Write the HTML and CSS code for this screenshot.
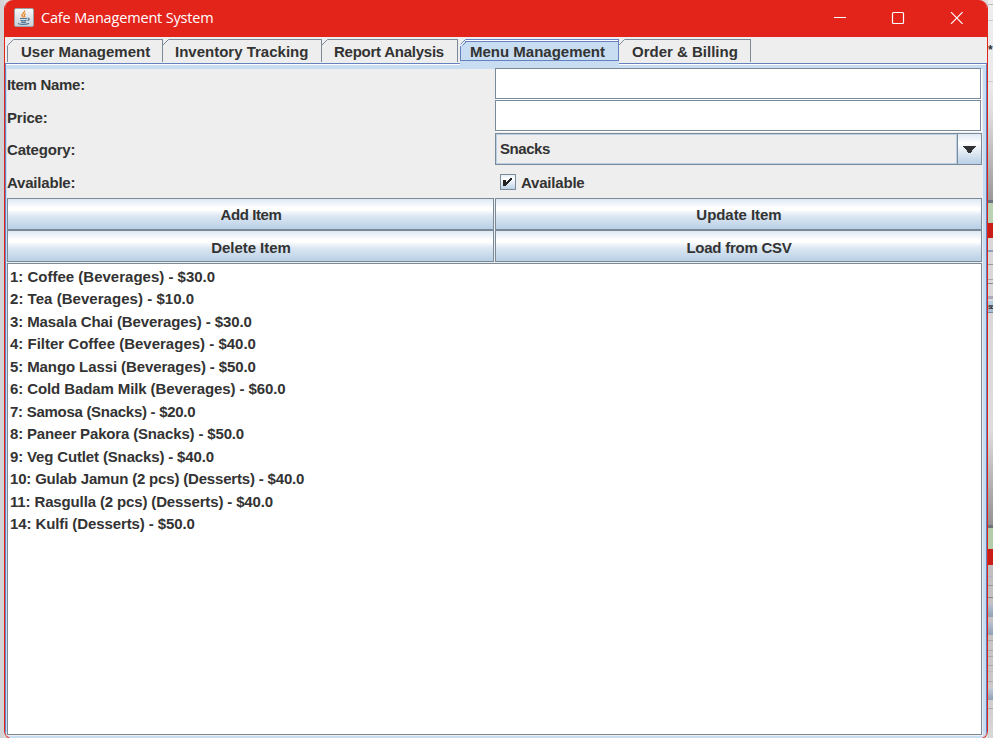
FILE: index.html
```html
<!DOCTYPE html>
<html lang="en">
<head>
<meta charset="utf-8">
<title>Cafe Management System</title>
<link rel="stylesheet" href="styles.css">
</head>
<body>
<div class="desktop">
  <main class="window">
    <header class="titlebar">
      <svg class="app-icon" width="20" height="19" viewBox="0 0 20 19">
        <defs><linearGradient id="tile" x1="0" y1="0" x2="0" y2="1"><stop offset="0" stop-color="#f8f8f8"/><stop offset="1" stop-color="#c9d0d6"/></linearGradient></defs>
        <rect x=".5" y=".5" width="19" height="18" rx="1.5" fill="url(#tile)" stroke="#9ba2a8"/>
        <path d="M10.6 2.5c1 2-3.2 3-2.6 5 .2.8 1 1.400 1.600 2M11.800 5.500c-2.500 1-1.500 2.300-.8 3.700" fill="none" stroke="#e98724" stroke-width="1.300"/>
        <path d="M6 10.500h7M6.500 12.300c2 .7 4 .7 6 0M7 14c1.500.6 3.500.6 5 0M13.500 10.300c2.500-.3 2.200 1.700 0 2.300M4.500 15c-1.500 1.500 8 2 10.500.3" fill="none" stroke="#4f7898" stroke-width="1.100"/>
      </svg>
      <h1 class="title">Cafe Management System</h1>
      <svg class="controls" width="136" height="20" viewBox="0 0 136 20" fill="none" stroke="#fff">
        <path d="M2 9.500h12"/>
        <rect x="60.500" y="4.500" width="11" height="11" rx="1" stroke-width="1.200"/>
        <path d="M119 4.200l11.600 11.600M130.600 4.200L119 15.800" stroke-width="1.200"/>
      </svg>
    </header>
    <nav class="tabs">
      <div class="tab tab-users"><svg class="notch" width="8" height="8"><path d="M.5 6.500L6.500 .5H8"/></svg><span>User Management</span></div>
      <div class="tab tab-inventory"><svg class="notch" width="8" height="8"><path d="M0 6L5.500 .5H8"/></svg><span>Inventory Tracking</span></div>
      <div class="tab tab-report"><svg class="notch" width="8" height="8"><path d="M0 6L5.500 .5H8"/></svg><span>Report Analysis</span></div>
      <div class="tab tab-menu"><svg class="notch" width="8" height="8"><path d="M.5 5.500L5.500 .5H8M2.500 6.500L6.500 2.500H8"/></svg><span>Menu Management</span></div>
      <div class="tab tab-order"><svg class="notch" width="8" height="8"><path d="M0 6L5.500 .5H8"/></svg><span>Order &amp; Billing</span></div>
    </nav>
    <section class="panel">
      <div class="form">
        <label class="item-name">Item Name:</label><div class="field"></div>
        <label class="low">Price:</label><div class="field"></div>
        <label>Category:</label>
        <div class="combo"><span class="combo-value">Snacks</span><span class="combo-arrow"><svg width="13" height="7" shape-rendering="crispEdges"><path d="M0 0h13L7.500 7h-2z" fill="#333"/></svg></span></div>
        <label class="low">Available:</label>
        <div class="check"><svg class="box" width="16" height="16" viewBox="0 0 16 16">
          <defs><linearGradient id="metal" x1="0" y1="0" x2="0" y2="1"><stop offset="0" stop-color="#e4edf6"/><stop offset=".3" stop-color="#fff"/><stop offset="1" stop-color="#b8cfe5"/></linearGradient></defs>
          <rect x=".5" y=".5" width="15" height="15" fill="url(#metal)" stroke="#7a8a99"/>
          <path d="M3 6h3v3l5-5.500h1v2L6 12H3z" fill="#222" shape-rendering="crispEdges"/></svg><span>Available</span></div>
        <button class="add">Add Item</button><button>Update Item</button>
        <button class="delete">Delete Item</button><button class="load">Load from CSV</button>
      </div>
      <ul class="list">
        <li>1: Coffee (Beverages) - $30.0</li>
        <li>2: Tea (Beverages) - $10.0</li>
        <li>3: Masala Chai (Beverages) - $30.0</li>
        <li>4: Filter Coffee (Beverages) - $40.0</li>
        <li>5: Mango Lassi (Beverages) - $50.0</li>
        <li>6: Cold Badam Milk (Beverages) - $60.0</li>
        <li>7: Samosa (Snacks) - $20.0</li>
        <li>8: Paneer Pakora (Snacks) - $50.0</li>
        <li>9: Veg Cutlet (Snacks) - $40.0</li>
        <li>10: Gulab Jamun (2 pcs) (Desserts) - $40.0</li>
        <li>11: Rasgulla (2 pcs) (Desserts) - $40.0</li>
        <li>14: Kulfi (Desserts) - $50.0</li>
      </ul>
    </section>
  </main>
  <aside class="behind"><span class="star">*</span><span class="peek">se</span></aside>
</div>
</body>
</html>
```
FILE: styles.css
```css
* { box-sizing: border-box; }
body { margin: 0; width: 993px; height: 738px; overflow: hidden; font: bold 15px/20px "Liberation Sans", Arial, sans-serif; color: #333; }
.desktop { position: relative; display: flex; height: 738px; padding-left: 4px; background: linear-gradient(90deg, #d4d4d6 4px, #dcdcdc 4px); }
.window { position: relative; z-index: 1; width: 984px; height: 739px; border: 1px solid #e3241b; border-top: 0; border-radius: 9px 9px 8px 8px; overflow: hidden; background: #eee; display: flex; flex-direction: column; flex: none; }
.titlebar { flex: none; height: 37px; margin: 0 -1px; padding-left: 10px; background: #e3241b; display: flex; align-items: center; }
.app-icon { margin-top: -2px; }
.title { margin: -1px 0 0 7px; font: 400 14.5px/20px "Open Sans", "Noto Sans", sans-serif; color: #fff; letter-spacing: -.17px; flex: 1; white-space: nowrap; }
.controls { margin-right: 20px; margin-top: -1px; }

.tabs { flex: none; height: 26px; padding: 2px 0 0 2px; display: flex; }
.tab { position: relative; height: 23px; border: 1px solid #7a8a99; border-width: 1px 1px 0 0; white-space: nowrap; line-height: 24px; padding-left: 13px; }
.tab-users { width: 156px; border-left-width: 1px; }
.tab-inventory { width: 159px; padding-left: 12px; }
.tab-report { width: 136px; padding-left: 12px; letter-spacing: -.25px; }
.tab-menu { width: 159px; height: 29px; margin-left: 2px; padding-left: 9px; background: linear-gradient(#6382bf, #6382bf) 0 20px / 157px 1px no-repeat, #c8ddf2; border-color: #6382bf; border-left: 1px solid #6382bf; z-index: 2; box-shadow: inset 0 1px #fff, inset 0 2px #6382bf; }
.tab-menu::after { content: ""; position: absolute; left: -1px; right: -1px; top: 21px; height: 7px; background: #c8ddf2; }
.tab-order { width: 132px; padding-left: 13px; }
.notch { position: absolute; left: 0; top: -1px; background: linear-gradient(135deg, #eee 42%, transparent 42%); fill: none; stroke: #7a8a99; }
.tab-users .notch { left: -1px; background: linear-gradient(135deg, #eee 48%, transparent 48%); }
.tab-menu .notch { left: -1px; stroke: #6382bf; background: linear-gradient(135deg, #eee 36%, #fff 36%, #fff 48%, transparent 48%); }

.panel { flex: 1; display: flex; flex-direction: column; border: solid #6382bf; border-width: 1px 1px 0; padding: 4px 4px 3px 1px; box-shadow: inset 0 1px #fff, inset -3px 0 #c8ddf2, inset 1px 0 #c8ddf2, inset 0 5px #c8ddf2, inset 0 -2px #c8ddf2; }
.form { flex: none; height: 195px; display: grid; grid-template-columns: 487px 487px; grid-template-rows: 32px 33px 33px 32px 32px 33px; column-gap: 1px; }
.form label { align-self: center; letter-spacing: -.2px; padding-top: 1px; }
.form label.item-name { letter-spacing: -.3px; }
.form label.low { padding-top: 2px; }
.field { height: 31px; background: #fff; border: 1px solid #7a8a99; margin-right: 1px; box-shadow: 1px 1px #fff; }
.form .combo { height: 32px; border: 1px solid #7a8a99; display: flex; box-shadow: inset 1px 1px #b8cfe5, inset 0 -1px #b8cfe5; }
.combo-value { flex: 1; padding-left: 4px; line-height: 29px; border-right: 1px solid #b8cfe5; letter-spacing: -.45px; }
.combo-arrow { width: 25px; border-left: 1px solid #7a8a99; display: flex; align-items: center; justify-content: center; background: linear-gradient(#dfe9f4, #fff 30%, #b8cfe5); margin-right: -1px; border-right: 1px solid #7a8a99; }
.check { display: flex; align-items: center; padding-left: 5px; gap: 5px; letter-spacing: -.2px; }
.check span { padding-top: 2px; }
.form button { height: 32px; margin: 0; padding: 2px 0 0 1px; border: 1px solid #7a8a99; border-radius: 0; font: inherit; letter-spacing: -.05px; color: #333; background: linear-gradient(#dde8f3, #fff 30%, #fff 36%, #dde8f3 56%, #b8cfe5); }
.form button.add { letter-spacing: -.4px; }
.form button.load { letter-spacing: -.25px; }
.form button.delete, .form button.load { padding-top: 3px; }
.list { flex: 1; margin: 0; padding: 2px 0 0 2px; list-style: none; background: #fff; border: 1px solid #7a8a99; }
.list li { height: 22.48px; line-height: 22px; white-space: nowrap; letter-spacing: -.1px; }
.list li:nth-child(1), .list li:nth-child(4) { letter-spacing: 0; }
.list li:nth-child(2) { letter-spacing: .04px; }
.list li:nth-child(7) { letter-spacing: -.28px; }
.list li:nth-child(8) { letter-spacing: -.16px; }
.list li:nth-child(9) { letter-spacing: -.15px; }
.list li:nth-child(10) { letter-spacing: -.18px; }
.list li:nth-child(11) { letter-spacing: -.14px; }

.behind { position: relative; flex: 1; background:
  linear-gradient(#b0b4c8, #b0b4c8) 0 576px / 100% 1px no-repeat,
  linear-gradient(#9899a0, #9899a0) 0 585px / 100% 1px no-repeat,
  linear-gradient(#888, #888) 0 597px / 100% 1px no-repeat,
  linear-gradient(#b8c2ce, #8fa1b4) 0 604px / 100% 13px no-repeat,
  linear-gradient(#b8c2ce, #8fa1b4) 0 622px / 100% 13px no-repeat,
  linear-gradient(#a5a5a8, #a5a5a8) 0 640px / 100% 1px no-repeat,
  linear-gradient(#aaa, #aaa) 0 650px / 100% 1px no-repeat,
  linear-gradient(#aaa, #aaa) 0 656px / 100% 1px no-repeat,
  linear-gradient(#aaa, #aaa) 0 665px / 100% 1px no-repeat,
  linear-gradient(#bbb, #bbb) 0 671px / 100% 1px no-repeat,
  linear-gradient(#aaa, #aaa) 0 681px / 100% 1px no-repeat,
  linear-gradient(#c2ccd7, #8fa1b4) 0 688px / 100% 12px no-repeat,
  linear-gradient(#aaa, #aaa) 0 708px / 100% 1px no-repeat,
  linear-gradient(#8fa0bd, #8fa0bd) 0 250px / 100% 2px no-repeat,
  linear-gradient(#999, #999) 0 264px / 100% 1px no-repeat,
  linear-gradient(#aaa, #aaa) 0 279px / 100% 1px no-repeat,
  linear-gradient(#889, #889) 0 283px / 100% 1px no-repeat,
  linear-gradient(#aab, #aab) 0 296px / 100% 3px no-repeat,
  linear-gradient(#b8cfe5, #a7bbcf) 0 301px / 100% 11px no-repeat,
  linear-gradient(#789, #789) 0 312px / 100% 1px no-repeat,
  linear-gradient(#bbb, #bbb) 0 4px / 100% 1px no-repeat,
  linear-gradient(#ccc, #ccc) 0 20px / 100% 1px no-repeat,
  linear-gradient(#ccc, #ccc) 0 81px / 100% 1px no-repeat,
  linear-gradient(#eee 0, #eaeaea 80px, #e0e0e0 110px, #999 200px, #6b737b 200px, #6b737b 203px, #b9d3b2 203px, #b9d3b2 223px, #c71f18 223px, #c71f18 238px, #d8d8d8 238px, #d8d8d8 315px, #ddd 430px, #929292 525px, #6b737b 525px, #6b737b 528px, #b3cdab 528px, #b3cdab 549px, #c71f18 549px, #c71f18 565px, #bfbfbf 565px, #c8c8c8 680px, #d8d8d8 738px); }
.star, .peek { position: absolute; left: 0; white-space: nowrap; color: #333; }
.star { top: 43px; font: bold 12px/14px "Liberation Sans", sans-serif; }
.peek { top: 301px; font: bold 7px/11px "Liberation Sans", sans-serif; letter-spacing: -1.3px; }
```
